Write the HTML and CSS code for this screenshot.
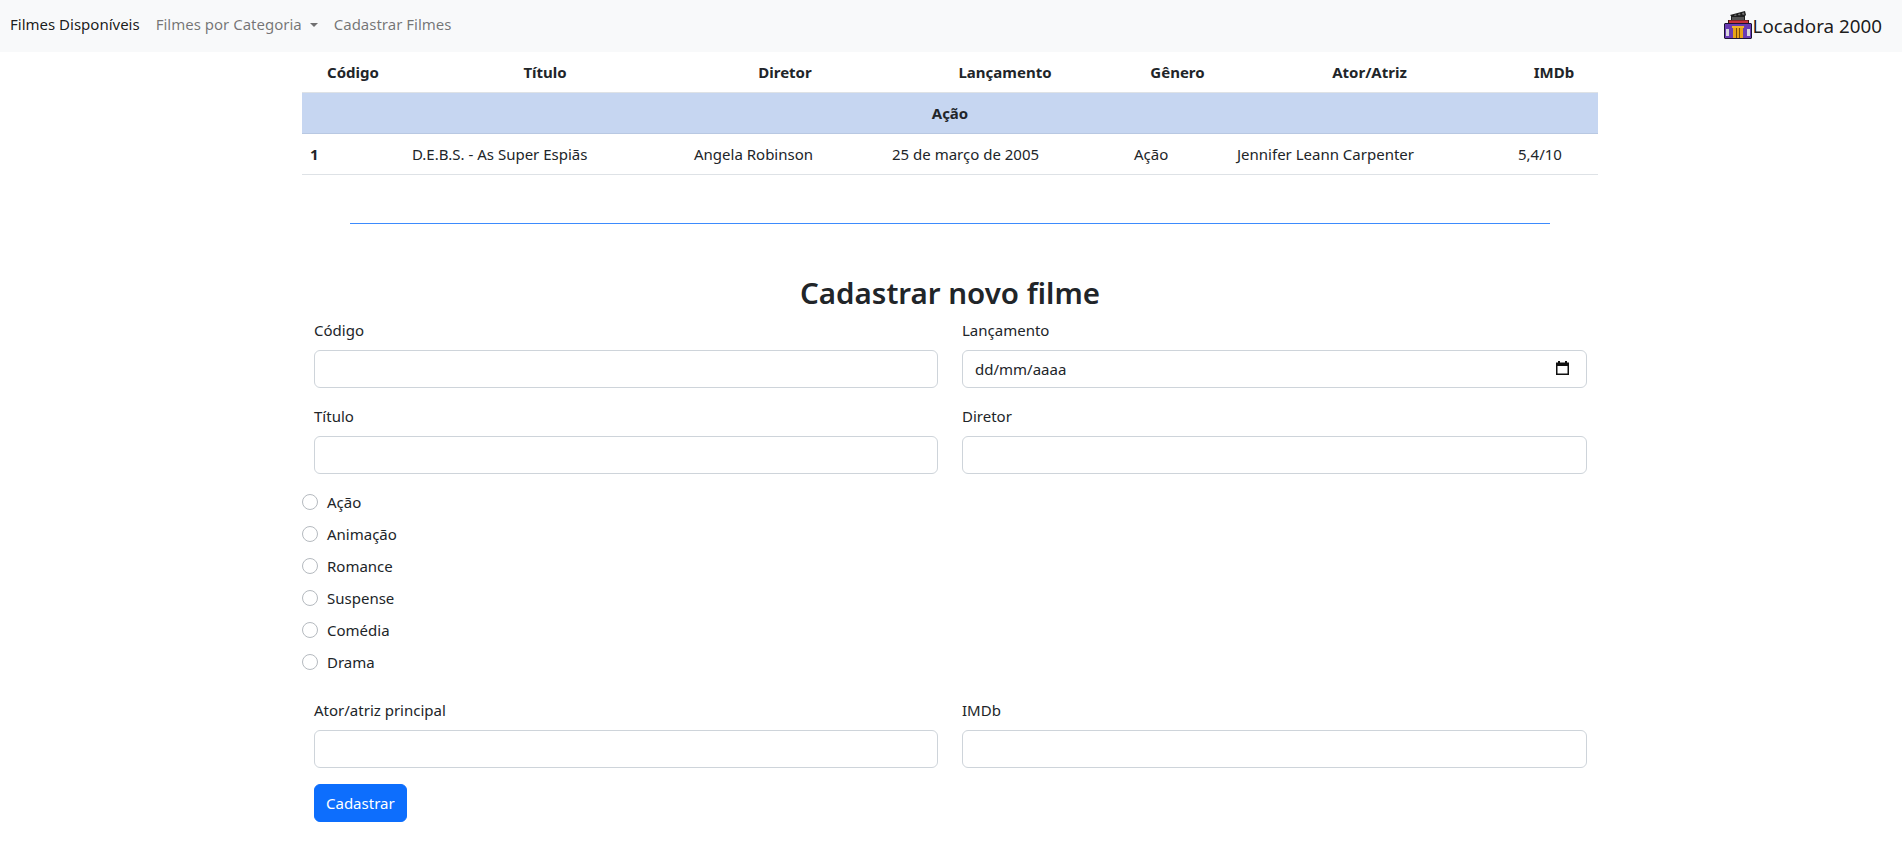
FILE: index.html
```html
<!DOCTYPE html>
<html lang="pt-BR">
<head>
    <meta charset="UTF-8">
    <meta name="viewport" content="width=device-width, initial-scale=1.0">
    <title>Locadora 2000</title>
    <link rel="stylesheet" href="styles.css">
</head>
<body>

    <nav class="navbar">
        <ul class="nav-links">
            <li><a class="nav-link active" href="#">Filmes Disponíveis</a></li>
            <li><a class="nav-link dropdown-toggle" href="#">Filmes por Categoria</a></li>
            <li><a class="nav-link" href="#">Cadastrar Filmes</a></li>
        </ul>
        <a class="brand" href="#">
            <svg class="brand-logo" viewBox="0 0 28 28" width="28" height="28">
                <!-- claquete -->
                <path fill="#1f1f1f" d="M6 4 21 0l1 4-1 1v5H7V5z"/>
                <path fill="#555" d="M8 6h12v4H8z"/>
                <path fill="#777" d="M10 4l2-.6.5 1.4h-2zM14 3l2-.6.5 1.8h-2zM18 2l2-.6.5 2.4h-2z"/>
                <!-- telhado -->
                <path fill="#3a1414" d="M4 9h21v4H4z"/>
                <path fill="#c8323a" d="M5 9.500h19v3H5z"/>
                <!-- predio -->
                <path fill="#1c1436" d="M1 12h26l1 1v14l-1 1H1l-1-1V13z"/>
                <path fill="#6a3cb4" d="M1 13h26v14H1z"/>
                <path fill="#d9d6e0" d="M2 18h3v7H2zM23 18h3v7h-3z"/>
                <path fill="#f0b429" d="M8 15h12v2H8z"/>
                <path fill="#e8a317" d="M9 17h10v10H9z"/>
                <path fill="#7a4c0c" d="M12 17h1v10h-1zM15 17h1v10h-1z"/>
            </svg>
            Locadora 2000
        </a>
    </nav>

    <main class="container">
        <table class="filmes">
            <thead>
                <tr>
                    <th class="col-codigo">Código</th>
                    <th class="col-titulo">Título</th>
                    <th class="col-diretor">Diretor</th>
                    <th class="col-lancamento">Lançamento</th>
                    <th class="col-genero">Gênero</th>
                    <th class="col-ator">Ator/Atriz</th>
                    <th class="col-imdb">IMDb</th>
                </tr>
            </thead>
            <tbody>
                <tr class="grupo">
                    <th colspan="7">Ação</th>
                </tr>
                <tr>
                    <td class="codigo">1</td>
                    <td>D.E.B.S. - As Super Espiãs</td>
                    <td>Angela Robinson</td>
                    <td>25 de março de 2005</td>
                    <td>Ação</td>
                    <td>Jennifer Leann Carpenter</td>
                    <td>5,4/10</td>
                </tr>
            </tbody>
        </table>

        <hr class="divisor">

        <h1 class="form-titulo">Cadastrar novo filme</h1>

        <form>
            <div class="form-row">
                <div class="campo">
                    <label for="codigo">Código</label>
                    <input type="text" id="codigo">
                </div>
                <div class="campo">
                    <label for="lancamento">Lançamento</label>
                    <div class="campo-data">
                        <input type="text" id="lancamento" placeholder="dd/mm/aaaa">
                        <svg class="icone-data" viewBox="0 0 13 14" width="13" height="14">
                            <path fill="#111" d="M2 0h2v1.500h5V0h2v1.500h2V14H0V1.500h2zM1.500 5v7.500h10V5z"/>
                        </svg>
                    </div>
                </div>
            </div>
            <div class="form-row curta">
                <div class="campo">
                    <label for="titulo">Título</label>
                    <input type="text" id="titulo">
                </div>
                <div class="campo">
                    <label for="diretor">Diretor</label>
                    <input type="text" id="diretor">
                </div>
            </div>

            <div class="generos">
                <label class="radio"><input type="radio" name="genero"> Ação</label>
                <label class="radio"><input type="radio" name="genero"> Animação</label>
                <label class="radio"><input type="radio" name="genero"> Romance</label>
                <label class="radio"><input type="radio" name="genero"> Suspense</label>
                <label class="radio"><input type="radio" name="genero"> Comédia</label>
                <label class="radio"><input type="radio" name="genero"> Drama</label>
            </div>

            <div class="form-row">
                <div class="campo">
                    <label for="ator">Ator/atriz principal</label>
                    <input type="text" id="ator">
                </div>
                <div class="campo">
                    <label for="imdb">IMDb</label>
                    <input type="text" id="imdb">
                </div>
            </div>

            <button type="submit" class="btn">Cadastrar</button>
        </form>
    </main>

</body>
</html>
```

FILE: styles.css
```css
* {
    box-sizing: border-box;
}
body {
    margin: 0;
    font-family: "Noto Sans", Arial, sans-serif;
    font-size: 15px;
    line-height: 24px;
    color: #212529;
    background-color: #fff;
}
a {
    text-decoration: none;
}
.navbar {
    display: flex;
    justify-content: space-between;
    align-items: center;
    height: 52px;
    padding: 0 20px 0 10px;
    background-color: #f8f9fa;
}
.nav-links {
    display: flex;
    gap: 16px;
    margin: 0;
    padding: 0 0 5px;
    list-style: none;
}
.nav-link {
    color: rgba(0, 0, 0, 0.55);
}
.nav-link.active {
    color: rgba(0, 0, 0, 0.9);
}
.dropdown-toggle::after {
    content: "";
    display: inline-block;
    margin-left: 8px;
    vertical-align: 3px;
    border-top: 4px solid;
    border-right: 4px solid transparent;
    border-left: 4px solid transparent;
}
.brand {
    display: flex;
    align-items: center;
    padding-bottom: 1px;
    font-size: 18.8px;
    color: rgba(0, 0, 0, 0.9);
}
.brand-logo {
    display: block;
    margin: 0 1px 2px 0;
}
.container {
    width: 1296px;
    margin: 0 304px 0 302px;
}
.filmes {
    width: 100%;
    table-layout: fixed;
    border-collapse: separate;
    border-spacing: 0;
}
.filmes th, .filmes td {
    height: 41px;
    padding: 8px;
    text-align: left;
    border-bottom: 1px solid #dee2e6;
}
.filmes th {
    text-align: center;
    font-weight: 700;
}
.col-codigo { width: 102px; }
.col-titulo { width: 282px; }
.col-diretor { width: 198px; }
.col-lancamento { width: 242px; }
.col-genero { width: 103px; }
.col-ator { width: 281px; }
.col-imdb { width: 88px; }
.filmes td.codigo {
    font-weight: 700;
}
.grupo th {
    background-color: #c6d6f1;
    border-bottom-color: #b8c8e2;
}
.divisor {
    width: 1200px;
    height: 1px;
    margin: 48px auto 0;
    border: 0;
    background-color: #3d8bfd;
}
.form-titulo {
    margin: 47px 0 3px;
    font-size: 29.5px;
    line-height: 44px;
    font-weight: 600;
    text-align: center;
}
.form-row {
    display: grid;
    grid-template-columns: 624px 625px;
    gap: 24px;
    padding: 0 11px 0 12px;
}
.campo {
    display: flex;
    flex-direction: column;
    margin-bottom: 16px;
}
.curta .campo {
    margin-bottom: 12px;
}
.campo label {
    margin-bottom: 8px;
}
.campo input {
    width: 100%;
    height: 38px;
    padding: 6px 12px;
    font: inherit;
    color: #212529;
    background-color: #fff;
    border: 1px solid #ced4da;
    border-radius: 6px;
}
.campo input::placeholder {
    color: #212529;
    opacity: 1;
}
.campo-data {
    position: relative;
}
.icone-data {
    position: absolute;
    top: 11px;
    right: 18px;
}
.generos {
    display: flex;
    flex-direction: column;
    margin-bottom: 20px;
}
.radio {
    display: flex;
    align-items: center;
    gap: 9px;
    height: 32px;
}
.radio input {
    appearance: none;
    width: 16px;
    height: 16px;
    margin: 0;
    background-color: #fff;
    border: 1px solid #b5babf;
    border-radius: 50%;
}
.btn {
    display: block;
    height: 38px;
    margin-left: 12px;
    padding: 6px 11px;
    font: inherit;
    color: #fff;
    background-color: #0d6efd;
    border: 1px solid #0d6efd;
    border-radius: 6px;
    cursor: pointer;
}
```
